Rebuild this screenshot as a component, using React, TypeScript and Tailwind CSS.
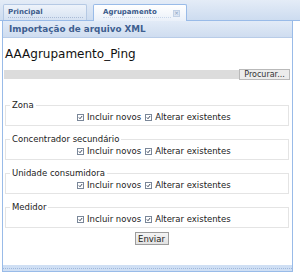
import React from "react";

const groups = ["Zona", "Concentrador secundário", "Unidade consumidora", "Medidor"];

function Check() {
  return (
    <span className="w-[7px] h-[7px] border border-[#7a8799] bg-white flex items-center justify-center mr-[3px]">
      <svg viewBox="0 0 7 7" className="w-[7px] h-[7px]">
        <path d="M1.2 3.4 L2.8 5.2 L5.8 1.4" stroke="#1f2d45" strokeWidth="1.2" fill="none" />
      </svg>
    </span>
  );
}

function CheckRow() {
  return (
    <div className="flex items-center h-[10px] pl-[71px] text-[8.5px] leading-[10px] text-[#222]">
      <Check />
      <span className="mr-[4px]">Incluir novos</span>
      <Check />
      <span>Alterar existentes</span>
    </div>
  );
}

export default function App() {
  return (
    <div className="w-[300px] h-[273px] bg-white font-['DejaVu_Sans',sans-serif] overflow-hidden">
      {/* tab strip */}
      <div className="h-[21px] bg-[linear-gradient(#e4ecf7,#cddcf0)] border-b border-[#99bbe8] flex items-end pl-[3px] gap-[6px]">
        <div className="w-[84px] h-[16px] bg-[linear-gradient(#eef3fa,#d6e2f2)] border border-b-0 border-[#b5c9e4] rounded-t-[2px] flex items-center pl-[4px]">
          <span className="text-[7px] font-bold text-[#3b5a8a] border-b border-dotted border-[#aabbd6] pr-[40px] leading-[9px]">Principal</span>
        </div>
        <div className="w-[94px] h-[17px] bg-[linear-gradient(#ffffff,#eaf0f9)] border border-b-0 border-[#99bbe8] rounded-t-[2px] flex items-center pl-[9px] -mb-px">
          <span className="text-[7px] font-bold text-[#3b5a8a] leading-[9px] border-b border-dotted border-[#c8d6ea] pr-[14px]">Agrupamento</span>
          <span className="ml-auto mr-[6px] w-[7px] h-[7px] bg-[#dde6f3] border border-[#c2d1e6] flex items-center justify-center text-[6px] leading-none text-[#8aa0c0]">×</span>
        </div>
      </div>

      {/* panel */}
      <div className="ml-[2px] w-[291px] h-[244px] border-x border-[#99bbe8] flex flex-col">
        <div className="h-[17px] bg-[linear-gradient(#e2ebf7,#cfddf0)] border-b border-[#b8cce8] flex items-center pl-[6px]">
          <span className="text-[8.8px] font-bold text-[#3e5f90] leading-[10px]">Importação de arquivo XML</span>
        </div>
        <div className="flex-1 bg-white px-[1px] pt-[9px]">
          <div className="pl-px text-[12px] leading-[14px] text-[#111]">AAAgrupamento_Ping</div>
          <div className="mt-[9px] h-[9px] bg-[#dcdcdc] flex justify-end items-center mr-[1px]">
            <button className="h-[11px] w-[51px] bg-[#ececec] border border-[#b9b9b9] text-[8px] leading-[9px] text-[#333]">Procurar...</button>
          </div>

          <div className="mt-[21px] flex flex-col gap-[8px] mr-[2px] ml-[1px]">
            {groups.map((g) => (
              <fieldset key={g} className="border border-[#e4e4e4] px-0 pt-[2px] pb-[3px]">
                <legend className="ml-[4px] px-[2px] text-[8.5px] leading-[10px] text-[#222]">{g}</legend>
                <CheckRow />
              </fieldset>
            ))}
          </div>

          <div className="flex justify-center mt-[4px]">
            <button className="ml-[8px] h-[13px] w-[34px] bg-[linear-gradient(#f4f4f4,#e2e2e2)] border border-[#9c9c9c] text-[8.5px] leading-[10px] text-[#222]">Enviar</button>
          </div>
        </div>
      </div>
      <div className="ml-[2px] w-[291px] h-[7px] bg-[#cfdff4] border-x border-b border-[#99bbe8] flex items-center">
        <div className="w-full border-t border-dotted border-[#9fb8dc]" />
      </div>
    </div>
  );
}
